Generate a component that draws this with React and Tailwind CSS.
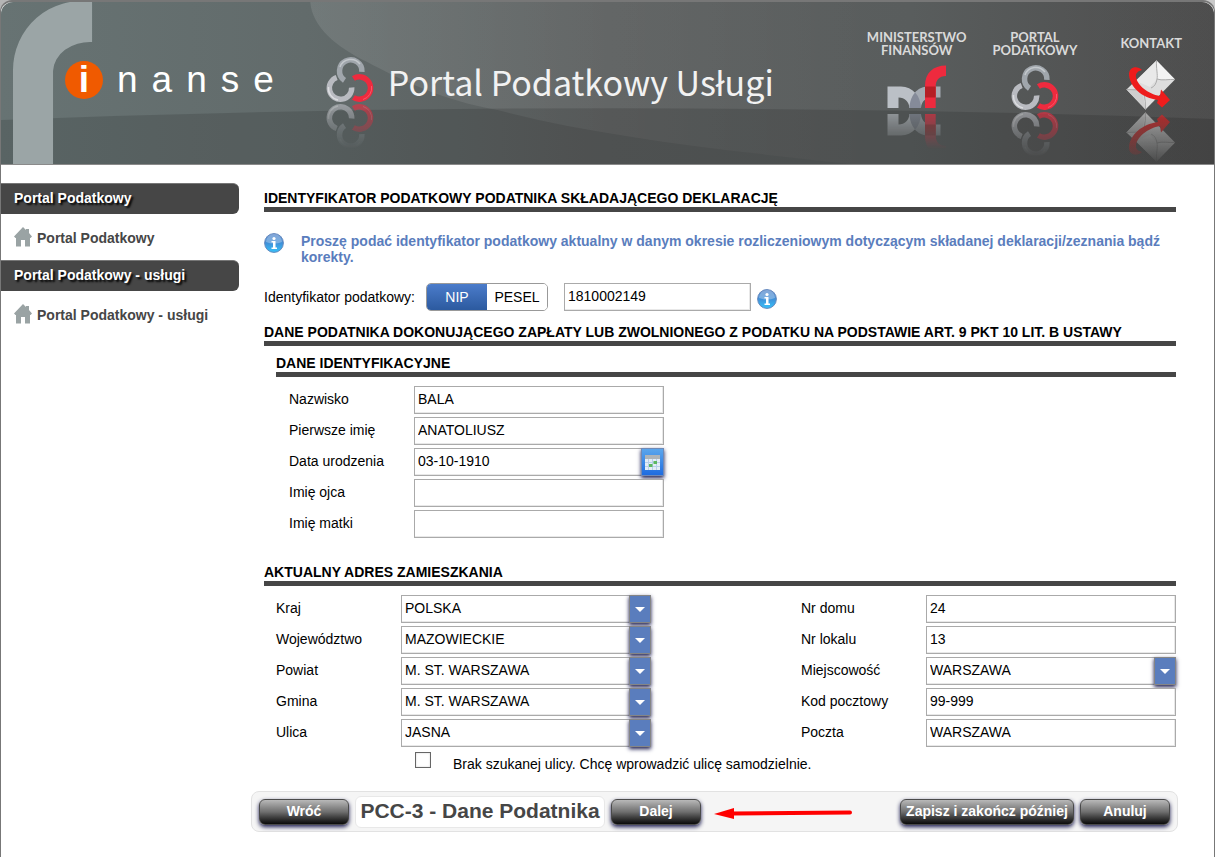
//App.jsx

import React, { useState } from "react";

// Fields of the identification section.
const personFields = [
  { id: "nazwisko", label: "Nazwisko", value: "BALA" },
  { id: "imie", label: "Pierwsze imię", value: "ANATOLIUSZ" },
  { id: "data", label: "Data urodzenia", value: "03-10-1910", type: "date" },
  { id: "ojciec", label: "Imię ojca", value: "" },
  { id: "matka", label: "Imię matki", value: "" },
];

// Left and right column of the address section.
const addressLeft = [
  { id: "kraj", label: "Kraj", value: "POLSKA", type: "select" },
  { id: "wojewodztwo", label: "Województwo", value: "MAZOWIECKIE", type: "select" },
  { id: "powiat", label: "Powiat", value: "M. ST. WARSZAWA", type: "select" },
  { id: "gmina", label: "Gmina", value: "M. ST. WARSZAWA", type: "select" },
  { id: "ulica", label: "Ulica", value: "JASNA", type: "select" },
];

const addressRight = [
  { id: "nrdomu", label: "Nr domu", value: "24" },
  { id: "nrlokalu", label: "Nr lokalu", value: "13" },
  { id: "miejscowosc", label: "Miejscowość", value: "WARSZAWA", type: "select" },
  { id: "kod", label: "Kod pocztowy", value: "99-999" },
  { id: "poczta", label: "Poczta", value: "WARSZAWA" },
];

// Draws its children with a fading mirror image below them.
const Reflected = ({ id, width, mirrorY, fade, children }) => (
  <svg className="overflow-visible" width={width} height="96" viewBox={`0 0 ${width} 96`} aria-hidden="true">
    <defs>
      <linearGradient id={`${id}-fade`} x1="0" y1={mirrorY} x2="0" y2={mirrorY + fade} gradientUnits="userSpaceOnUse">
        <stop offset="0" stopColor="#fff" stopOpacity="0.65" />
        <stop offset="0.45" stopColor="#fff" stopOpacity="0.35" />
        <stop offset="1" stopColor="#fff" stopOpacity="0" />
      </linearGradient>
      <mask id={`${id}-mask`} maskUnits="userSpaceOnUse" x="-2" y="0" width={width + 4} height="110">
        <rect x="-2" y={mirrorY} width={width + 4} height="60" fill={`url(#${id}-fade)`} />
      </mask>
    </defs>
    {children}
    <g mask={`url(#${id}-mask)`}>
      <g transform={`translate(0 ${mirrorY * 2}) scale(1 -1)`}>{children}</g>
    </g>
  </svg>
);

// Three open rings, the logo of the portal.
const Rings = ({ id }) => (
  <Reflected id={id} width={48} mirrorY={46} fade={46}>
    <g fill="none" strokeWidth="5.500">
      <path d="M18.500 23.400A11.200 11.200 0 1 1 35.900 14.800" stroke="#a0a6ac" />
      <path d="M25.700 30.500A11.200 11.200 0 1 1 10.700 20.500" stroke="#b9bbc1" />
      <path d="M27.400 21.500A11.200 11.200 0 1 1 27.400 40.500" stroke="#ee2a3e" />
      <path d="M14 10A11.500 11.500 0 0 1 34 7" stroke="#c3c8cc" strokeWidth="1.500" />
      <path d="M2.500 30A12 12 0 0 0 12 43" stroke="#dcdde0" strokeWidth="1.500" />
      <path d="M37 42.500A12 12 0 0 0 45.500 29" stroke="#f7596a" strokeWidth="1" />
    </g>
  </Reflected>
);

const MinistryLogo = () => (
  <Reflected id="mf" width={60} mirrorY={46} fade={38}>
    <path d="M0.500 21.500H14C26 21.500 33 31 34 43H22.500C22 37 18 32.500 11.500 32.500V43H0.500Z" fill="#bbc0c6" />
    <path d="M22.500 43C23 31 30 21.500 41 21.500H53.500V32.500H45C39 32.500 34.500 36 34 43Z" fill="#a4aab2" />
    <path d="M28.200 27.500C32 31.500 33.600 37 34 43H22.500C22.800 37 24.500 31.500 28.200 27.500Z" fill="#858b99" />
    <path d="M38 43V21C38 8 46 0.500 59 0.500V11C52 11 48.700 15 48.700 22V43Z" fill="#ee2a3e" />
    <path d="M38 21.500H48.700V32.500H38Z" fill="#b51e25" />
  </Reflected>
);

const EnvelopeLogo = () => (
  <Reflected id="mail" width={50} mirrorY={46} fade={54}>
    <path d="M30.500 -4.500L49 14.500L19.500 44.500L0.500 24.500Z" fill="#dedede" />
    <path d="M30.500 -4.500L49 14.500L31 14Z" fill="#f3f3f3" />
    <path d="M30.500 -4.500L31 14L24 22L10 16Z" fill="#e9e9e9" />
    <path d="M0.500 24.500L16 25L19.500 44.500Z" fill="#cfcfcf" />
    <path d="M30.500 -4.500C30 3 32 10 31 14C36 16 43 14 49 14.500M31 14Q30 21 25 23M0.500 24.500L14 25Q20 27 19.500 44.500" fill="none" stroke="#acacac" strokeWidth="1" />
    <path d="M16 5C11 0 2.500 2 3 10C4 22 16 33 32 35L31 38L36 42.500L44 35L35 24.500L34 31C22 29 11 20 10 12C9.500 8 12 6 16 5Z" fill="#ee1c1c" />
  </Reflected>
);

const HouseIcon = () => (
  <svg width="18" height="20" viewBox="0 0 18 20" aria-hidden="true">
    <path d="M9 0L12 3V2H15V6L18 9.500L16.500 11H16V19.500H11V13H7V19.500H2V11H1.500L0 9.500Z" fill="#9aa3a4" />
  </svg>
);

const InfoIcon = ({ id }) => (
  <svg className="shrink-0" width="20" height="20" viewBox="0 0 20 20" aria-hidden="true">
    <defs>
      <linearGradient id={id} x1="0" y1="0" x2="0" y2="1">
        <stop offset="0" stopColor="#4d7fc6" />
        <stop offset="0.5" stopColor="#3f8fd8" />
        <stop offset="1" stopColor="#35c3fb" />
      </linearGradient>
    </defs>
    <circle cx="10" cy="10" r="9.400" fill={`url(#${id})`} stroke="#6588bd" strokeWidth="1" />
    <path d="M2 9A8 8 0 0 1 18 9Q10 12 2 9Z" fill="#fff" opacity="0.3" />
    <circle cx="10" cy="5.500" r="1.600" fill="#fff" />
    <path d="M7.500 8H11.500V14.500H13V16H7.500V14.500H9V9.500H7.500Z" fill="#fff" />
  </svg>
);

// Grey backdrop of the page header with the big "f" arc.
const HeaderArt = () => (
  <svg
    className="absolute inset-0 h-full w-full"
    viewBox="0 0 1212 162"
    preserveAspectRatio="none"
    aria-hidden="true"
  >
    <defs>
      <linearGradient id="head-bg" x1="0" y1="0" x2="1" y2="0">
        <stop offset="0" stopColor="#677373" />
        <stop offset="0.25" stopColor="#626b6b" />
        <stop offset="0.5" stopColor="#5a5d5d" />
        <stop offset="0.75" stopColor="#565a5a" />
        <stop offset="1" stopColor="#4a4a4a" />
      </linearGradient>
      <linearGradient id="head-glow" x1="310" y1="0" x2="860" y2="0" gradientUnits="userSpaceOnUse">
        <stop offset="0" stopColor="#fff" stopOpacity="0.1" />
        <stop offset="1" stopColor="#fff" stopOpacity="0.02" />
      </linearGradient>
    </defs>
    <rect width="1212" height="162" fill="url(#head-bg)" />
    <path d="M309 0C311 25 335 45 366 60C400 78 440 98 496 108C600 135 720 148 850 162H1212V0Z" fill="url(#head-glow)" />
    <path d="M0 118Q600 95 1212 117V162H0Z" fill="#000" opacity="0.13" />
    <path d="M12 162V69A68 69 0 0 1 91 0V40A37 30 0 0 0 52 69V162Z" fill="#9ba5a6" />
  </svg>
);

const HeaderLink = ({ label, children }) => (
  <a href="#" className="flex flex-col items-center">
    <span className="flex h-[27px] items-center text-center font-['Lato',sans-serif] text-[13px] leading-[13px] font-bold whitespace-pre-line text-[#dadada]">
      {label}
    </span>
    <span className="mt-2">{children}</span>
  </a>
);

const Header = () => (
  <header className="relative h-[163px] overflow-hidden rounded-t-xl border-b border-[#8a8a8a]">
    <HeaderArt />
    <div className="relative flex h-full items-start justify-between pr-8 pl-[64px]">
      <div className="flex items-start">
        {/* Wordmark: the first letter sits in an orange disc */}
        <div className="mt-[59px] flex items-center gap-[14px] text-[37px] leading-[38px] text-white">
          <span className="flex size-[38px] items-center justify-center rounded-full bg-[#f05a00] font-bold">
            i
          </span>
          <span>n</span>
          <span>a</span>
          <span>n</span>
          <span>s</span>
          <span>e</span>
        </div>
        <div className="mt-[55px] ml-[52px]">
          <Rings id="rings-main" />
        </div>
        <h1 className="mt-[58px] ml-[14px] font-['Noto_Sans_CJK_JP','Noto_Sans',sans-serif] text-[34px] leading-[44px] text-[#f2f2f2]">
          Portal Podatkowy Usługi
        </h1>
      </div>
      <nav className="mt-[28px] flex">
        <HeaderLink label={"MINISTERSTWO\nFINANSÓW"}>
          <MinistryLogo />
        </HeaderLink>
        <div className="ml-[26px]">
          <HeaderLink label={"PORTAL\nPODATKOWY"}>
            <Rings id="rings-nav" />
          </HeaderLink>
        </div>
        <div className="ml-[43px]">
          <HeaderLink label="KONTAKT">
            <EnvelopeLogo />
          </HeaderLink>
        </div>
      </nav>
    </div>
  </header>
);

const SideGroup = ({ title }) => (
  <section>
    <h2 className="rounded-r-md border-t border-[#777] bg-[#464646] pt-1.5 pb-2 pl-[13px] text-[14px] leading-[16px] font-bold text-white [text-shadow:2px_2px_2px_#000]">
      {title}
    </h2>
    <a href="#" className="flex h-[46px] items-center gap-[5px] pl-[13px] text-[14px] font-bold text-[#464646]">
      <HouseIcon />
      <span className="pt-[3px]">{title}</span>
    </a>
  </section>
);

const Heading = ({ children }) => (
  <h2 className="border-b-[5px] border-[#464646] pb-px text-[14px] leading-[16px] font-bold text-black">
    {children}
  </h2>
);

const boxClass =
  "h-[28px] w-full rounded-none border border-[#aaa] bg-white px-[3px] pb-0.5 text-[14px] text-black shadow-[inset_-1px_-1px_0_#e8e8e8] outline-none";

// One label with its control: a text box, a drop-down or a date box.
const Field = ({ field }) => {
  const [value, setValue] = useState(field.value);

  return (
    <div className="flex items-center">
      <label htmlFor={field.id} className="w-[125px] shrink-0 pb-0.5 leading-[16px]">
        {field.label}
      </label>
      <div className="relative w-[250px]">
        {field.type === "select" ? (
          <>
            <select
              id={field.id}
              value={value}
              onChange={(e) => setValue(e.target.value)}
              className={`${boxClass} block appearance-none`}
            >
              <option>{field.value}</option>
            </select>
            <span className="pointer-events-none absolute top-0 right-0 flex h-[28px] w-[22px] items-center justify-center border border-[#858585] bg-[#5a7dbd] shadow-[0_2px_4px_#1c1c50]">
              <svg width="10" height="5" viewBox="0 0 10 5" aria-hidden="true">
                <path d="M0 0H10L5 5Z" fill="#fff" />
              </svg>
            </span>
          </>
        ) : (
          <input
            id={field.id}
            type="text"
            value={value}
            onChange={(e) => setValue(e.target.value)}
            className={`${boxClass} block`}
          />
        )}
        {field.type === "date" && (
          <button
            type="button"
            aria-label="Kalendarz"
            className="absolute top-0 right-0 flex h-[28px] w-[23px] items-center justify-center border border-[#7089b5] bg-linear-to-b from-[#5ba6ec] to-[#1e6be0] shadow-[0_2px_4px_#1c1c50]"
          >
            <svg width="15" height="15" viewBox="0 0 15 15" aria-hidden="true">
              <path d="M0 0H15V15H0Z" fill="#e4edf6" />
              <path d="M0 0H15V4H0Z" fill="#aeb4b8" />
              <path d="M3.500 4V15M7.500 4V15M11.500 4V15M0 7.500H15M0 11.500H15" stroke="#b7d0ea" />
              <path d="M8.500 6H12V9H8.500ZM4 9H7.500V12H4Z" fill="#5cb860" />
            </svg>
          </button>
        )}
      </div>
    </div>
  );
};

const FieldColumn = ({ fields }) => (
  <div className="flex flex-col gap-[3px]">
    {fields.map((field) => (
      <Field key={field.id} field={field} />
    ))}
  </div>
);

const DarkButton = ({ wide, children }) => (
  <button
    type="button"
    className={`${wide ? "w-[174px]" : "w-[90px]"} h-[26px] rounded-md border border-[#4a4a4a] bg-linear-to-b from-[#b9b9b9] via-[#6e6e6e] via-50% to-[#0c0c0c] pb-0.5 text-[14px] leading-[16px] font-bold whitespace-nowrap text-white shadow-[0_2px_4px_#1c1c50]`}
  >
    {children}
  </button>
);

const App = () => {
  const [kind, setKind] = useState("NIP");
  const [number, setNumber] = useState("1810002149");
  const [ownStreet, setOwnStreet] = useState(false);

  return (
    <div className="min-h-screen bg-linear-to-r from-[#b5b5b5] to-[#c9c9c9] font-['Liberation_Sans',Arial,sans-serif] text-[14px] text-black">
      <div className="flex min-h-screen flex-col rounded-t-xl border-x border-t-2 border-[#777] bg-white">
        <Header />
        <div className="flex grow">
          <aside className="w-[238px] shrink-0 pt-[18px]">
            <SideGroup title="Portal Podatkowy" />
            <SideGroup title="Portal Podatkowy - usługi" />
          </aside>

          <main className="min-w-0 grow pr-9 pb-6 pl-3">
            <form className="pt-[25px]" onSubmit={(e) => e.preventDefault()}>
              <div className="pr-0.5 pl-[13px]">
                <Heading>IDENTYFIKATOR PODATKOWY PODATNIKA SKŁADAJĄCEGO DEKLARACJĘ</Heading>
                <div className="mt-[21px] flex gap-[17px]">
                  <InfoIcon id="info-a" />
                  <p className="leading-[16px] font-bold text-[#5a7dbd]">
                    Proszę podać identyfikator podatkowy aktualny w danym okresie rozliczeniowym dotyczącym
                    składanej deklaracji/zeznania bądź korekty.
                  </p>
                </div>

                <div className="mt-[18px] mb-[13px] flex items-center">
                  <label htmlFor="identyfikator" className="w-[162px] leading-[16px]">
                    Identyfikator podatkowy:
                  </label>
                  <div className="flex h-[28px] w-[122px] overflow-hidden rounded-[5px] border border-[#999]">
                    {["NIP", "PESEL"].map((name) => (
                      <button
                        key={name}
                        type="button"
                        aria-pressed={kind === name}
                        onClick={() => setKind(name)}
                        className={
                          kind === name
                            ? "flex-1 bg-linear-to-b from-[#4b7ccb] to-[#2c5a9f] text-white"
                            : "flex-1 bg-white text-black"
                        }
                      >
                        {name}
                      </button>
                    ))}
                  </div>
                  <div className="mr-[6px] ml-4 w-[187px]">
                    <input
                      id="identyfikator"
                      type="text"
                      value={number}
                      onChange={(e) => setNumber(e.target.value)}
                      className={`${boxClass} block`}
                    />
                  </div>
                  <div className="pt-1">
                    <InfoIcon id="info-b" />
                  </div>
                </div>

                <Heading>
                  DANE PODATNIKA DOKONUJĄCEGO ZAPŁATY LUB ZWOLNIONEGO Z PODATKU NA PODSTAWIE ART. 9 PKT 10 LIT. B
                  USTAWY
                </Heading>
                <div className="mt-[9px] pl-3">
                  <Heading>DANE IDENTYFIKACYJNE</Heading>
                  <div className="mt-[9px] pl-[13px]">
                    <FieldColumn fields={personFields} />
                  </div>
                </div>

                <div className="mt-[26px]">
                  <Heading>AKTUALNY ADRES ZAMIESZKANIA</Heading>
                  <div className="mt-[9px] flex justify-between pl-3">
                    <FieldColumn fields={addressLeft} />
                    <FieldColumn fields={addressRight} />
                  </div>
                  <div className="mt-[5px] flex pl-[151px]">
                    <input
                      id="ownstreet"
                      type="checkbox"
                      checked={ownStreet}
                      onChange={(e) => setOwnStreet(e.target.checked)}
                      className="size-4 appearance-none border border-[#666] bg-white shadow-[inset_0_0_2px_#ccc] checked:bg-[#5a7dbd]"
                    />
                    <label htmlFor="ownstreet" className="mt-1 ml-[22px] leading-[16px]">
                      Brak szukanej ulicy. Chcę wprowadzić ulicę samodzielnie.
                    </label>
                  </div>
                </div>
              </div>

              {/* Navigation between the steps of the form */}
              <div className="mt-[19px] flex h-[41px] items-center rounded-lg border border-[#e2e2e2] bg-[#f5f5f5] px-[7px]">
                <DarkButton>Wróć</DarkButton>
                <h2 className="mx-1.5 w-[250px] rounded-md border border-[#e8e8e8] bg-white pt-px pb-[3px] text-center text-[21px] leading-[26px] font-bold whitespace-nowrap text-[#464646]">
                  PCC-3 - Dane Podatnika
                </h2>
                <DarkButton>Dalej</DarkButton>
                <svg className="ml-[13px]" width="138" height="14" viewBox="0 0 138 14" aria-hidden="true">
                  <path d="M0 9L20 3V14Z" fill="#f00" />
                  <path d="M18 8.500L136 7.500" stroke="#f00" strokeWidth="4" strokeLinecap="round" />
                </svg>
                <div className="ml-auto flex gap-1.5">
                  <DarkButton wide>Zapisz i zakończ później</DarkButton>
                  <DarkButton>Anuluj</DarkButton>
                </div>
              </div>
            </form>
          </main>
        </div>
      </div>
    </div>
  );
};

export default App;
